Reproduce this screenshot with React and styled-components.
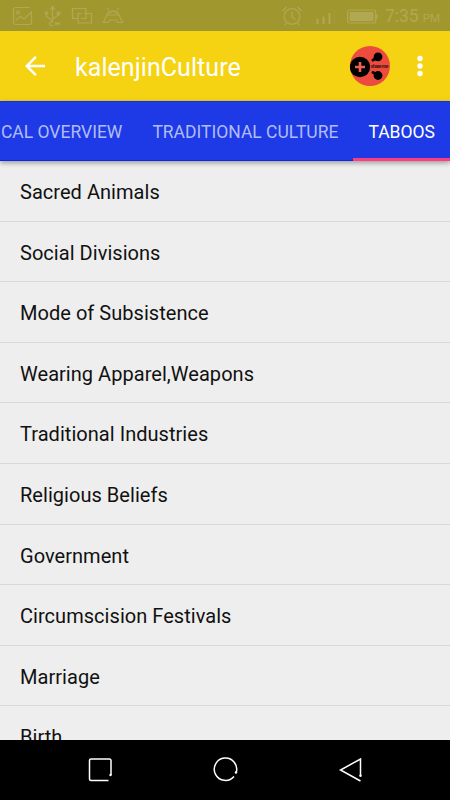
import {useState} from "react"
import styled, {createGlobalStyle} from "styled-components"

const GlobalStyle = createGlobalStyle`
  * {
    box-sizing: border-box;
  }

  body {
    margin: 0;
    font-family: Roboto, "Liberation Sans", sans-serif;
    background-color: #eeeeee;
  }
`

const Screen = styled.div`
  display: flex;
  flex-direction: column;
  width: 450px;
  height: 800px;
  overflow: hidden;
`

const StatusBar = styled.div`
  flex: none;
  display: flex;
  align-items: center;
  justify-content: space-between;
  height: 31px;
  padding: 0 10px 0 12px;
  background-color: #a0982e;
  color: #b0a852;
`

const StatusGroup = styled.div`
  display: flex;
  align-items: center;
  gap: ${(props) => props.$gap}px;

  svg {
    display: block;
    fill: none;
    stroke: currentColor;
    stroke-width: 1.2;
  }
`

const Clock = styled.span`
  font-size: 17.5px;
  line-height: 31px;
  margin-left: -5px;
  padding-top: 3px;

  small {
    margin-left: 4px;
    font-size: 11.5px;
  }
`

const Toolbar = styled.header`
  flex: none;
  display: flex;
  align-items: center;
  height: 70px;
  padding: 0 20px 0 25px;
  background-color: #f5d313;
  color: #ffffff;
`

const IconButton = styled.button`
  display: flex;
  padding: 0;
  border: none;
  background: none;
  color: inherit;
  cursor: pointer;
`

const Title = styled.h1`
  flex: 1;
  margin: 3px 0 0 30px;
  font-size: 25px;
  line-height: 30px;
  font-weight: 400;
  letter-spacing: 0.06px;
`

const ShareButton = styled(IconButton)`
  margin-right: 20px;
`

const TabBar = styled.nav`
  position: relative;
  flex: none;
  display: flex;
  justify-content: flex-end;
  height: 60px;
  background-color: #1d3ae6;
  border-top: 1px solid #0d2fee;
  border-bottom: 1px solid #0a27dc;
  box-shadow: 0 2px 5px rgba(0, 0, 0, 0.35);
`

const Tab = styled.button`
  flex: none;
  height: 60px;
  margin-top: -1px;
  padding: 2px 15px 0;
  border: none;
  background: none;
  box-shadow: ${(props) => (props.$active ? "inset 0 -3px #ff3b80" : "none")};
  color: ${(props) => (props.$active ? "#ffffff" : "#b2bcf7")};
  font-family: inherit;
  font-size: 17.5px;
  white-space: nowrap;
  cursor: pointer;
`

const List = styled.ul`
  flex: 1;
  min-height: 0;
  margin: 0;
  padding: 0;
  overflow: hidden;
  list-style: none;
  background-color: #eeeeee;
`

const ListItem = styled.li`
  height: 60.6px;
  padding: 1px 20px 0;
  border-bottom: 1px solid #d8d8d8;
  color: #111111;
  font-size: 20px;
  line-height: 60px;
  letter-spacing: 0.04px;
`

const NavBar = styled.footer`
  flex: none;
  display: flex;
  align-items: center;
  justify-content: center;
  gap: 97px;
  height: 60px;
  background-color: #000000;
  color: #ffffff;

  svg {
    fill: none;
    stroke: currentColor;
    stroke-width: 1.5;
  }
`

const tabs = ["CAL OVERVIEW", "TRADITIONAL CULTURE", "TABOOS"]

const topics = [
  "Sacred Animals",
  "Social Divisions",
  "Mode of Subsistence",
  "Wearing Apparel,Weapons",
  "Traditional Industries",
  "Religious Beliefs",
  "Government",
  "Circumscision Festivals",
  "Marriage",
  "Birth",
]

const StatusIcons = () => (
  <StatusBar>
    <StatusGroup $gap={9}>
      <svg width="21" height="20" viewBox="0 0 21 20">
        <path d="M19.500 5v11.500a2 2 0 0 1-2 2H3.500a2 2 0 0 1-2-2V3.500a2 2 0 0 1 2-2H18" />
        <circle cx="6" cy="6.500" r="1.400" />
        <path d="M3.500 14.500l5-4 3.500 2.500 7-6.500" />
      </svg>
      <svg width="20" height="22" viewBox="0 0 20 22">
        <path d="M10.500 3v14M10.500 15.500l-6-4V8M10.500 14l6-4V8M8.500 4l2-2.500 2 2.500z" />
        <circle cx="4.500" cy="8" r="1.200" />
        <path d="M15.300 7h2.400v2.400h-2.400zM11 17.300a2 2 0 1 0 0 2.700M13 18.700h5M14 17v3.400M17 17v3.400" />
      </svg>
      <svg width="22" height="18" viewBox="0 0 22 18">
        <path d="M7 11.500H1.500v-10h13.500v10H10" />
        <path d="M13 6.500h7.500v9.500H7V6.500h4" />
      </svg>
      <svg width="22" height="18" viewBox="0 0 22 18">
        <path d="M5 8a6.200 5.300 0 0 1 12 0zM7 3.500L5.500 1M15 3.500l1.500-2.500M8.500 5.500v1M13.500 5.500v1" />
        <path d="M5 8L1.500 15.500h4.500l2-2.500h6l2 2.500h4.500L17 8" />
      </svg>
    </StatusGroup>
    <StatusGroup $gap={12}>
      <svg width="22" height="22" viewBox="0 0 22 22">
        <circle cx="11" cy="11.500" r="7.800" />
        <path d="M11 6.500v5.500l3.500 2.500M1.500 6l4-4M20.500 6l-4-4M5.500 18l-2 2M16.500 18l2 2" />
      </svg>
      <svg width="20" height="22" viewBox="0 0 20 22">
        <path d="M2.500 19v-5M8.500 19v-7.500M14.500 19V8" strokeWidth="2" />
        <path d="M19.500 19V4" strokeWidth="0.600" opacity="0.500" />
      </svg>
      <svg width="31" height="22" viewBox="0 0 31 22">
        <rect x="0.600" y="5" width="28" height="13" rx="2" />
        <rect x="2.600" y="7" width="24" height="9" rx="1" fill="currentColor" stroke="none" />
        <path d="M29.500 9.500v4.500" strokeWidth="2" />
      </svg>
      <Clock>
        7:35<small>PM</small>
      </Clock>
    </StatusGroup>
  </StatusBar>
)

const ShareIcon = () => (
  <svg width="40" height="40" viewBox="0 0 40 40">
    <circle cx="20" cy="20" r="20" fill="#ed4b3d" />
    <circle cx="10" cy="21" r="10.200" fill="#000" />
    <path d="M10 16v10M5 21h10" stroke="#ed6253" strokeWidth="2.600" />
    <circle cx="28" cy="10.800" r="4.400" fill="#000" />
    <circle cx="28" cy="29.500" r="4.400" fill="#000" />
    <path d="M27 12l-4 2M27 28.500l-4-2" stroke="#000" strokeWidth="3" strokeLinecap="round" />
    <text x="20.500" y="22" fontSize="5" fontWeight="700" fill="#30100c" textLength="18">
      share me
    </text>
  </svg>
)

export default function App() {
  const [activeTab, setActiveTab] = useState("TABOOS")

  return (
    <>
      <GlobalStyle />
      <Screen>
        <StatusIcons />
        <Toolbar>
          <IconButton aria-label="Back">
            <svg width="20" height="20" viewBox="4 4 16 16" fill="currentColor">
              <path d="M20 11H7.830l5.590-5.590L12 4l-8 8 8 8 1.410-1.410L7.830 13H20v-2z" />
            </svg>
          </IconButton>
          <Title>kalenjinCulture</Title>
          <ShareButton aria-label="Share">
            <ShareIcon />
          </ShareButton>
          <IconButton aria-label="More options">
            <svg width="20" height="22" viewBox="0 0 20 22" fill="currentColor">
              <circle cx="10" cy="3.500" r="2.700" />
              <circle cx="10" cy="11" r="2.700" />
              <circle cx="10" cy="18.500" r="2.700" />
            </svg>
          </IconButton>
        </Toolbar>
        <TabBar>
          {tabs.map((tab) => (
            <Tab key={tab} $active={tab === activeTab} onClick={() => setActiveTab(tab)}>
              {tab}
            </Tab>
          ))}
        </TabBar>
        <List>
          {topics.map((topic) => (
            <ListItem key={topic}>{topic}</ListItem>
          ))}
        </List>
        <NavBar>
          <svg width="28" height="28" viewBox="0 0 28 28">
            <path d="M22.500 24.500H5a1.500 1.500 0 0 1-1.500-1.500V4.500A1.500 1.500 0 0 1 5 3h18.500a1.500 1.500 0 0 1 1.500 1.500V19" />
            <circle cx="24.500" cy="19" r="1.200" fill="currentColor" stroke="none" />
          </svg>
          <svg width="28" height="28" viewBox="0 0 28 28">
            <path d="M23 20.500A11.200 11.200 0 1 1 25.200 16.500" />
            <circle cx="25" cy="16.500" r="1.200" fill="currentColor" stroke="none" />
          </svg>
          <svg width="28" height="28" viewBox="0 0 28 28">
            <path d="M24.500 25L4.500 14l20-11v17" />
            <circle cx="24.500" cy="19.800" r="1.200" fill="currentColor" stroke="none" />
          </svg>
        </NavBar>
      </Screen>
    </>
  )
}
